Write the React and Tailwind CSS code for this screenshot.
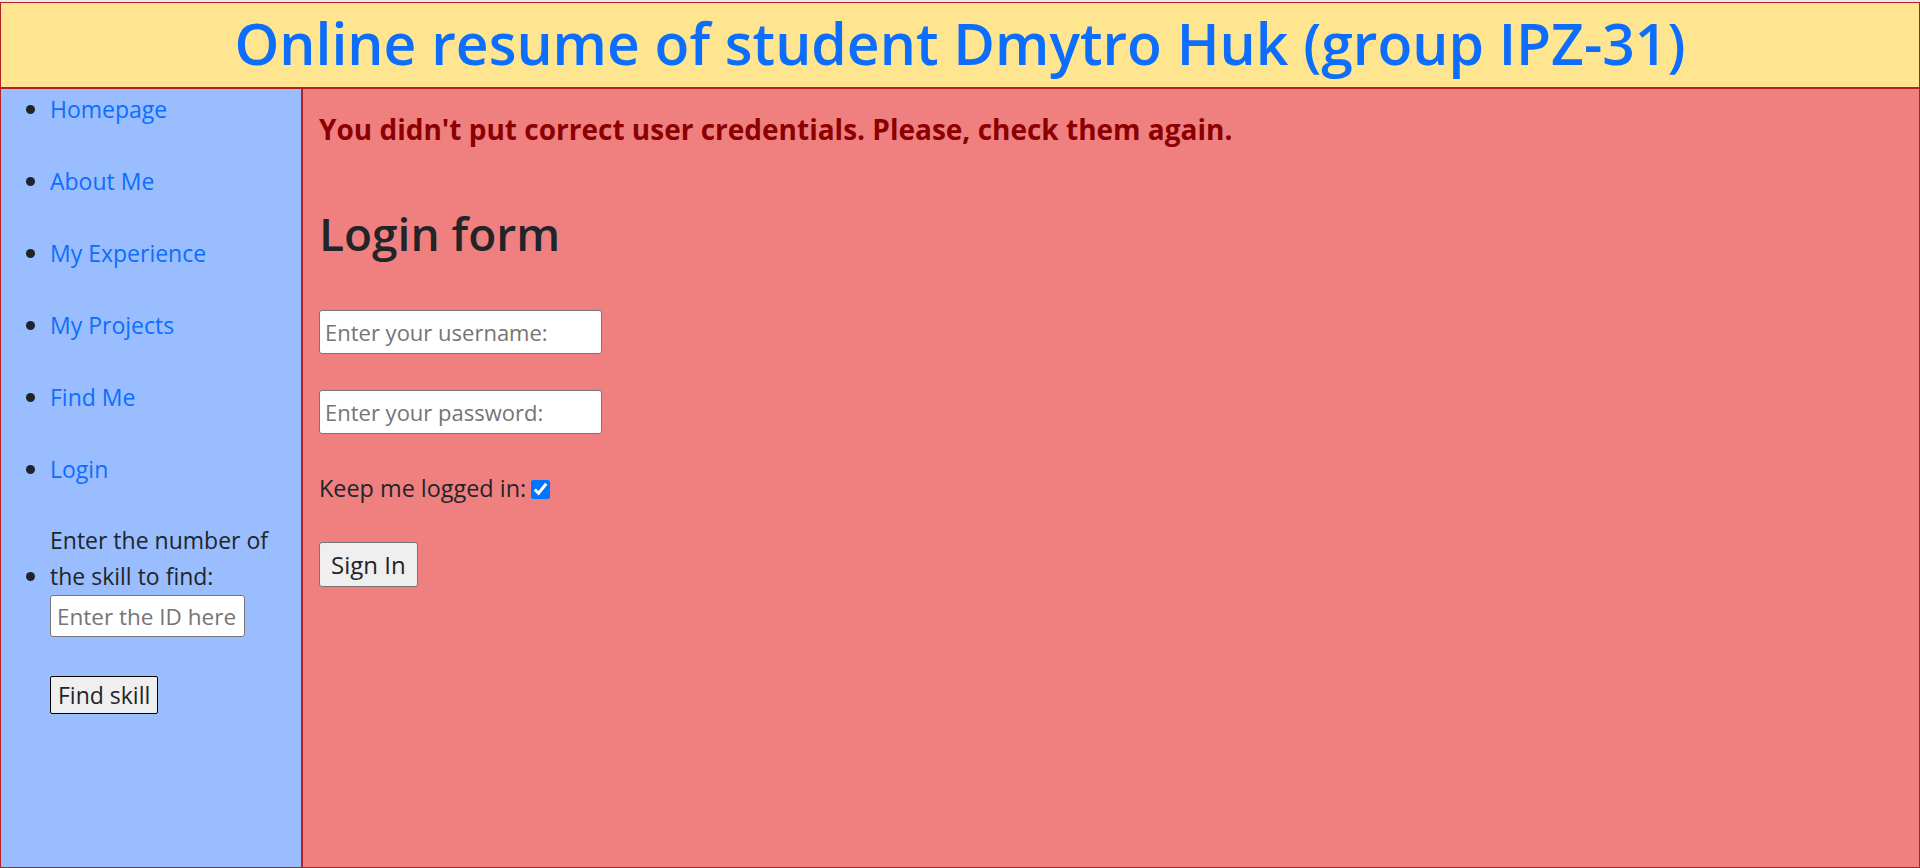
export default function App() {
  const links = ["Homepage", "About Me", "My Experience", "My Projects", "Find Me", "Login"];

  return (
    <div className="min-h-screen bg-[#e9e9e9] pt-[2px] text-[#212529]" style={{ fontFamily: '"Open Sans", "Noto Sans", sans-serif' }}>
      <div className="flex min-h-[866px] flex-col border border-[#b22222]">
        <header className="flex h-[86px] items-center justify-center border-b-2 border-[#b22222] bg-[#ffe58f] pb-[3px]">
          <h1 className="text-[57px] font-semibold leading-none text-[#0d6efd]">
            Online resume of student Dmytro Huk (group IPZ-31)
          </h1>
        </header>

        <div className="flex flex-1">
          <aside className="w-[302px] shrink-0 border-r-2 border-[#b22222] bg-[#99bdff]">
            <ul className="pt-[2px] text-[23px] leading-[36px]">
              {links.map((l) => (
                <li key={l} className="mb-[36px] flex">
                  <span className="flex w-[49px] shrink-0 items-center pl-[25px]">
                    <span className="h-[9px] w-[9px] rounded-full bg-[#212529]" />
                  </span>
                  <a href="#" className="text-[#0d6efd]">{l}</a>
                </li>
              ))}
              <li className="flex">
                <span className="mt-[35px] flex h-[36px] w-[49px] shrink-0 items-center pl-[25px]">
                  <span className="h-[9px] w-[9px] rounded-full bg-[#212529]" />
                </span>
                <div>
                  <label className="block w-[225px] leading-[35.5px]">Enter the number of the skill to find:</label>
                  <input
                    type="text"
                    placeholder="Enter the ID here"
                    className="mt-[1px] block h-[42px] w-[195px] rounded-[3px] border border-[#767676] bg-white px-[6px] text-[22.5px] placeholder:text-[#757575]"
                  />
                  <button className="mt-[39px] block h-[38px] rounded-[2px] border border-black bg-[#efefef] px-[7px] text-[23px] leading-none">
                    Find skill
                  </button>
                </div>
              </li>
            </ul>
          </aside>

          <main className="flex-1 bg-[#f08080] px-[16px]">
            <h4 className="mt-[23px] text-[28px] font-bold leading-[34px] text-[#8b0000]">
              You didn't put correct user credentials. Please, check them again.
            </h4>
            <h2 className="mt-[58px] text-[46px] font-semibold leading-[58px]">Login form</h2>
            <form className="mt-[48px]">
              <input
                type="text"
                placeholder="Enter your username:"
                className="block h-[44px] w-[283px] rounded-[3px] border border-[#767676] bg-white px-[5px] text-[22px] placeholder:text-[#757575]"
              />
              <input
                type="password"
                placeholder="Enter your password:"
                className="mt-[36px] block h-[44px] w-[283px] rounded-[3px] border border-[#767676] bg-white px-[5px] text-[22px] placeholder:text-[#757575]"
              />
              <div className="mt-[37px] flex h-[36px] items-center text-[23.4px]">
                <label>Keep me logged in:</label>
                <input type="checkbox" defaultChecked className="ml-[5px] h-[19px] w-[19px] accent-[#0075ff]" />
              </div>
              <button type="button" className="mt-[35px] block h-[45px] rounded-[3px] border border-[#767676] bg-[#efefef] px-[11px] text-[24px] leading-none">
                Sign In
              </button>
            </form>
          </main>
        </div>
      </div>
    </div>
  );
}
